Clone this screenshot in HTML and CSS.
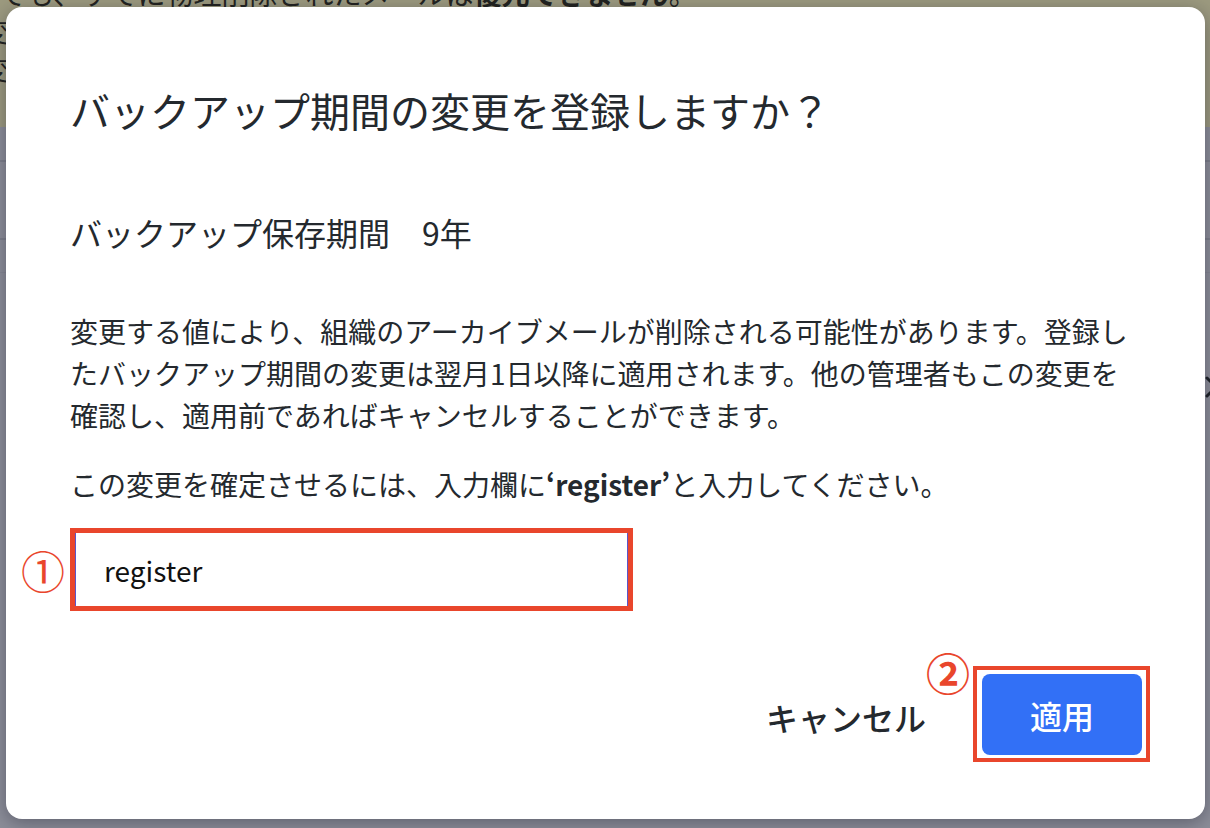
FILE: index.html
```html
<!DOCTYPE html>
<html lang="ja">
<head>
<meta charset="utf-8">
<title>バックアップ期間の変更</title>
<link rel="stylesheet" href="styles.css">
</head>
<body>
<div class="page">
  <div class="banner">
    <p class="banner-line">でも、すでに物理削除されたメールは<strong>復元できません</strong>。</p>
    <p class="banner-line shifted">変更</p>
    <p class="banner-line shifted">変更</p>
  </div>
  <div class="rows">
    <div class="row row-a"></div>
    <div class="row row-b"></div>
    <div class="row row-c"></div>
    <div class="row row-d">
      <svg class="chevron" width="16" height="24" viewBox="0 0 16 24"><path d="M3 3 L12 12 L3 21" fill="none" stroke="#1f2328" stroke-width="3" stroke-linecap="round" stroke-linejoin="round"/></svg>
    </div>
  </div>
</div>

<div class="overlay">
  <div class="modal" role="dialog" aria-modal="true">
    <h1 class="title">バックアップ期間の変更を登録しますか？</h1>
    <div class="setting">
      <span class="setting-label">バックアップ保存期間</span>
      <span class="setting-value">9年</span>
    </div>
    <p class="desc">変更する値により、組織のアーカイブメールが削除される可能性があります。登録したバックアップ期間の変更は翌月1日以降に適用されます。他の管理者もこの変更を確認し、適用前であればキャンセルすることができます。</p>
    <p class="confirm">この変更を確定させるには、入力欄に<strong>‘register’</strong>と入力してください。</p>
    <div class="field">
      <span class="mark mark-one">①</span>
      <div class="field-box">
        <input class="input" type="text" value="register">
      </div>
    </div>
    <div class="actions">
      <button class="btn-cancel" type="button">キャンセル</button>
      <div class="apply-wrap">
        <span class="mark mark-two">②</span>
        <button class="btn-apply" type="button">適用</button>
      </div>
    </div>
  </div>
</div>
</body>
</html>
```

FILE: styles.css
```css
* {
  box-sizing: border-box;
}

html, body {
  margin: 0;
  padding: 0;
}

body {
  width: 1210px;
  height: 828px;
  overflow: hidden;
  position: relative;
  font-family: "Noto Sans CJK JP", "Noto Sans", sans-serif;
  background: #8c8e99;
}

/* ---------- dimmed page behind the dialog ---------- */
.page {
  width: 1210px;
  height: 828px;
}

.banner {
  height: 127px;
  background: #9c9a7f;
  overflow: hidden;
  color: #22231f;
}

.banner-line {
  margin: 0;
  font-size: 28px;
  line-height: 38px;
  white-space: nowrap;
}

.banner-line:first-child {
  margin-top: -26px;
  margin-left: -2px;
}

.banner-line strong {
  font-weight: 700;
}

.banner-line.shifted {
  margin-left: -18px;
  font-size: 26px;
}

.rows {
  background: #8c8e99;
}

.row {
  border-bottom: 2px solid #7d7f8b;
}

.row-a {
  height: 35px;
}

.row-b {
  height: 78px;
}

.row-c {
  height: 33px;
  border-bottom: 1px solid #858793;
}

.row-d {
  height: 112px;
  border-bottom: none;
  display: flex;
  justify-content: flex-end;
  align-items: flex-end;
}

.chevron {
  margin-right: -10px;
  margin-bottom: -14px;
}

/* ---------- overlay + dialog ---------- */
.overlay {
  position: absolute;
  inset: 0;
  padding: 7px 5px 9px 6px;
}

.modal {
  width: 1199px;
  height: 812px;
  background: #ffffff;
  border-radius: 16px;
  box-shadow: 0 4px 18px rgba(20, 22, 40, 0.38);
  padding: 73px 64px 0;
  color: #24292e;
  display: flex;
  flex-direction: column;
}

.title {
  margin: 0;
  font-size: 40px;
  line-height: 60px;
  font-weight: 400;
  letter-spacing: 0;
}

.setting {
  margin-top: 68px;
  font-size: 32px;
  line-height: 48px;
  font-weight: 400;
  display: flex;
}

.setting-value {
  margin-left: 32px;
}

.desc,
.confirm {
  margin: 0;
  font-size: 28px;
  line-height: 42px;
  font-weight: 400;
}

.desc {
  margin-top: 54px;
}

.confirm {
  margin-top: 27px;
}

.confirm strong {
  font-weight: 700;
}

.field {
  position: relative;
  margin-top: 23px;
  display: flex;
}

.field-box {
  border: 5px solid #e9462c;
}

.input {
  display: block;
  width: 553px;
  height: 73px;
  border: none;
  border-left: 1px solid #5b55c9;
  border-right: 1px solid #5b55c9;
  border-radius: 0;
  outline: none;
  padding: 0 0 0 28px;
  font-family: "Noto Sans CJK JP", "Noto Sans", sans-serif;
  font-size: 28px;
  color: #111111;
  background: #ffffff;
}

.mark {
  position: absolute;
  font-size: 44px;
  line-height: 44px;
  color: #e9462c;
}

.mark-one {
  left: -49px;
  top: 20px;
  font-weight: 400;
}

.mark-two {
  left: -51px;
  top: -20px;
  font-weight: 700;
}

.actions {
  margin-top: 55px;
  margin-right: -9px;
  display: flex;
  justify-content: flex-end;
  align-items: center;
}

.btn-cancel {
  background: none;
  border: none;
  padding: 0;
  margin-right: 47px;
  margin-top: 6px;
  font-family: "Noto Sans CJK JP", sans-serif;
  font-size: 32px;
  font-weight: 500;
  color: #24292e;
  line-height: 48px;
}

.apply-wrap {
  position: relative;
  border: 4px solid #e9462c;
  padding: 4px 4px 3px 5px;
}

.btn-apply {
  display: block;
  width: 160px;
  height: 81px;
  border: none;
  border-radius: 8px;
  background: #3270f6;
  color: #ffffff;
  font-family: "Noto Sans CJK JP", sans-serif;
  font-size: 32px;
  font-weight: 500;
}
```
